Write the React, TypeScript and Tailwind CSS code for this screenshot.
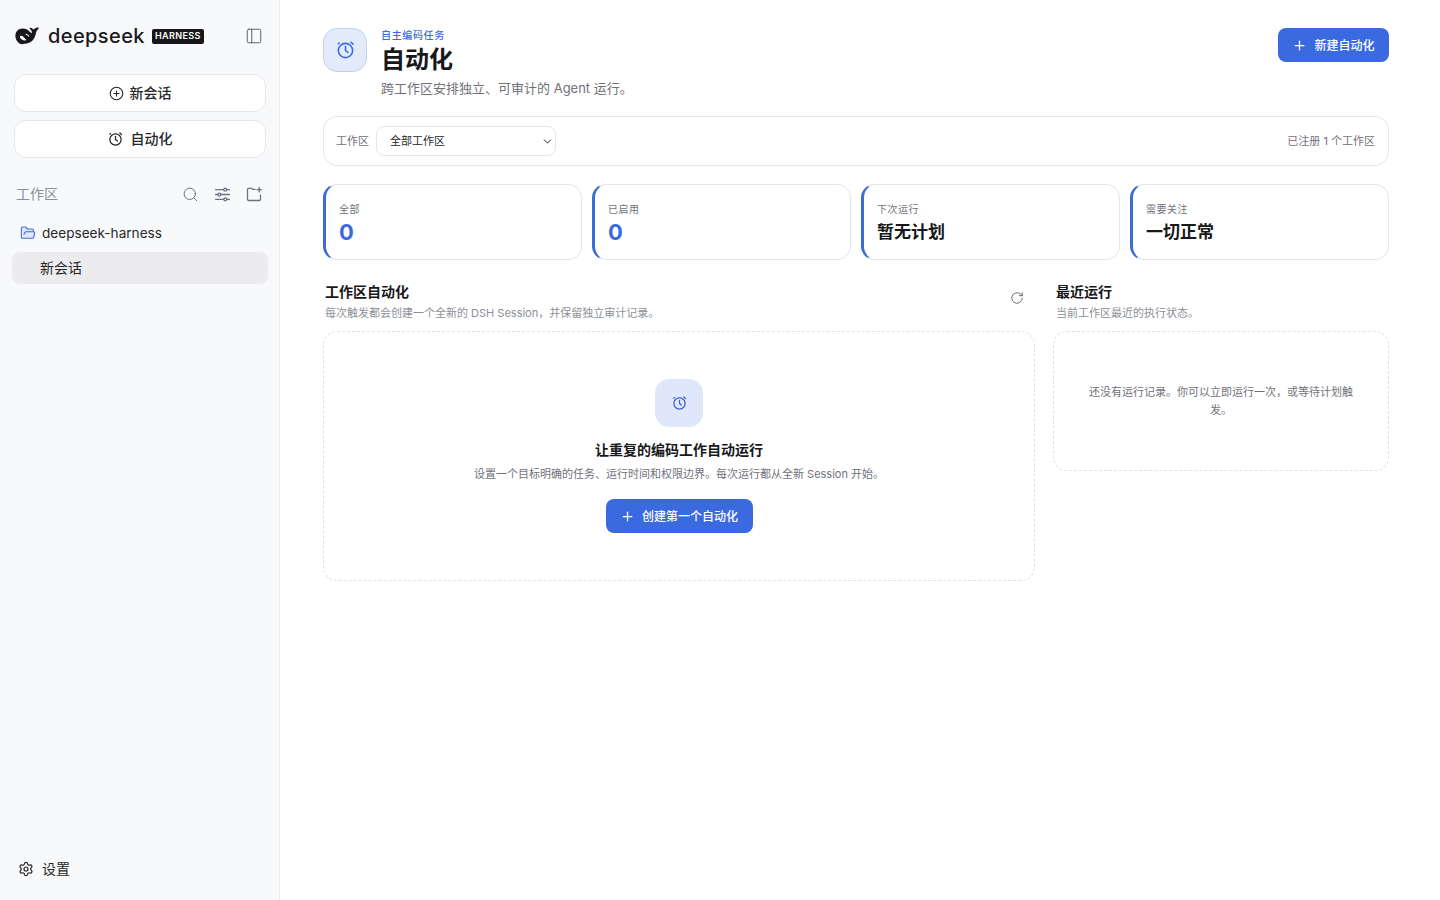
import { ChevronDown, CirclePlus, FolderOpen, PanelLeft, Plus, RotateCw, Search, Settings } from "lucide-react";

const stats = [
  { label: "全部", value: "0", accent: true },
  { label: "已启用", value: "0", accent: true },
  { label: "下次运行", value: "暂无计划", accent: false },
  { label: "需要关注", value: "一切正常", accent: false },
];

function WhaleLogo() {
  return (
    <svg width="25" height="20" viewBox="0 0 25 20" fill="none" className="shrink-0">
      <path
        d="M0.4 9.6C0.4 5.2 3.6 2.4 7.8 2.4c2.8 0 4.7 1 6.4 2.8 1 1.1 1.9 1.8 2.7 2 .2-1.6-.5-2.9-1.8-4-.9-.8-.6-1.7.5-1.5 1.2.2 2.4.9 3.2 1.9.9-1 2-1.7 3.6-2 1.3-.3 1.7.5 1 1.4-1.1 1.2-2 2.1-2.3 3.3-.9 6.5-4.6 11.4-11.6 11.4C4.6 19.7.4 15.1.4 9.6Z"
        fill="#18181b"
      />
      <path
        d="M5 10.2c.9-.8 2.2-.5 3.1.4 1.2 1.2 2.1 2.6 3.4 3.4-1.2.8-3.3.6-4.7-.5-1.4-1-2.4-2.6-1.8-3.3Z"
        fill="#f8f9fb"
      />
      <path d="M11 8.2c1 .2 2 .9 2.6 1.8" stroke="#f8f9fb" strokeWidth="1.1" strokeLinecap="round" />
    </svg>
  );
}

function ClockIcon({ size, stroke }: { size: number; stroke: number }) {
  return (
    <svg width={size} height={size} viewBox="0 1 24 24" fill="none" stroke="currentColor" strokeWidth={stroke} strokeLinecap="round" strokeLinejoin="round" className="shrink-0">
      <circle cx="12" cy="13" r="9" />
      <path d="M12 8v5l3 2.5" />
      <path d="M19 2.5l2.5 2.5M4 3.5L3 4.5" />
    </svg>
  );
}

function SlidersIcon() {
  return (
    <svg width="17" height="17" viewBox="0 0 16 16" fill="none" stroke="currentColor" strokeWidth="1.2" strokeLinecap="round">
      <path d="M1.5 3.5h7.7M12 3.5h2.5M1.5 8h2.2M6.6 8h7.9M1.5 12.5h7.7M12 12.5h2.5" />
      <circle cx="10.6" cy="3.5" r="1.4" />
      <circle cx="5.1" cy="8" r="1.4" />
      <circle cx="10.6" cy="12.5" r="1.4" />
    </svg>
  );
}

function NewFolderIcon() {
  return (
    <svg width="17" height="17" viewBox="0 0 17 17" fill="none" stroke="currentColor" strokeWidth="1.3" strokeLinecap="round" strokeLinejoin="round">
      <path d="M9 3.4H6.6L5.6 2.3H2.8c-.8 0-1.3.5-1.3 1.3v9.6c0 .8.5 1.3 1.3 1.3h10.4c.8 0 1.3-.5 1.3-1.3V8.8" />
      <path d="M13.2 1.5v4.4M11 3.7h4.4" />
    </svg>
  );
}

function Sidebar() {
  return (
    <aside className="w-[280px] h-full shrink-0 flex flex-col bg-[#f8f9fb] border-r border-[#eeeff2]">
      {/* Logo */}
      <div className="flex items-center h-[72px] pl-[15px] pr-4">
        <WhaleLogo />
        <span className="ml-2 text-[20px] leading-none font-medium tracking-[0.4px] text-[#18181b] font-['Inter',sans-serif]">
          deepseek
        </span>
        <span className="ml-[7px] px-[3px] h-[15px] flex items-center rounded-[2px] bg-[#18181b] text-white text-[9px] font-semibold tracking-[0.4px]">
          HARNESS
        </span>
        <PanelLeft size={18} strokeWidth={1.2} className="ml-auto text-[#52525b]" />
      </div>

      <div className="mt-[2px] pl-[14px] pr-[13px] flex flex-col gap-2">
        <button className="h-[38px] flex items-center justify-center gap-[6px] rounded-xl bg-white border border-[#e6e7eb] text-sm font-medium text-[#27272a]">
          <CirclePlus size={15} strokeWidth={1.8} />
          新会话
        </button>
        <button className="h-[38px] flex items-center justify-center gap-2 rounded-xl bg-white border border-[#e6e7eb] text-sm font-medium text-[#27272a]">
          <ClockIcon size={15} stroke={2} />
          自动化
        </button>
      </div>

      {/* Workspace list */}
      <div className="mt-[26px] pl-4 pr-4 h-5 flex items-center text-[#6b7280]">
        <span className="text-sm text-[#8b8f97]">工作区</span>
        <div className="ml-auto flex items-center gap-[15px]">
          <Search size={17} strokeWidth={1.4} />
          <SlidersIcon />
          <NewFolderIcon />
        </div>
      </div>
      <div className="mt-[19px] pl-5 h-[20px] flex items-center gap-[6px] text-[13.6px] text-[#27272a]">
        <FolderOpen size={16} strokeWidth={1.6} className="text-[#3b6cdf] fill-[#dfe8fb]" />
        deepseek-harness
      </div>
      <div className="mt-[9px] ml-3 mr-[11px] h-8 pl-7 flex items-center rounded-lg bg-[#ececee] text-sm text-[#27272a]">
        新会话
      </div>

      <div className="mt-auto mb-[21px] pl-[18px] h-5 flex items-center gap-2 text-sm text-[#27272a]">
        <Settings size={16} strokeWidth={1.8} />
        设置
      </div>
    </aside>
  );
}

export default function App() {
  return (
    <div className="h-[900px] flex bg-white overflow-hidden font-['Inter','Noto_Sans_CJK_SC',sans-serif]">
      <Sidebar />

      <main className="flex-1 pl-[43px] pr-[51px] pt-7">
        {/* Header */}
        <div className="flex items-start h-[88px]">
          <div className="w-11 h-11 rounded-[14px] bg-[#e3ebfb] border border-[#c3d1ee] flex items-center justify-center text-[#3b6cdf]">
            <ClockIcon size={19} stroke={2} />
          </div>
          <div className="ml-[14px]">
            <div className="text-[10px] leading-[14px] font-medium tracking-[0.65px] text-[#3b6cdf]">自主编码任务</div>
            <h1 className="mt-[2px] text-2xl leading-[32px] font-bold text-[#18181b]">自动化</h1>
            <p className="mt-[3px] text-[13px] leading-[18px] text-[#71717a]">跨工作区安排独立、可审计的 Agent 运行。</p>
          </div>
          <button className="ml-auto h-[34px] w-[111px] pt-px rounded-lg bg-[#3b6ae0] text-white text-xs font-medium flex items-center justify-center gap-[7px]">
            <Plus size={15} strokeWidth={2} />
            新建自动化
          </button>
        </div>

        {/* Workspace filter */}
        <div className="h-[50px] pl-3 pr-[13px] flex items-center rounded-[14px] border border-[#e6e7eb] text-[11px] text-[#71717a]">
          <span>工作区</span>
          <div className="ml-[7px] relative w-[180px]">
            <select className="w-full h-[30px] pl-[13px] appearance-none rounded-lg border border-[#e6e7eb] bg-white text-[11px] text-[#27272a]">
              <option>全部工作区</option>
            </select>
            <ChevronDown size={13} strokeWidth={1.8} className="absolute right-[2px] top-[9px] text-[#27272a]" />
          </div>
          <span className="ml-auto">已注册 1 个工作区</span>
        </div>

        {/* Stats */}
        <div className="mt-[18px] grid grid-cols-4 gap-[10px]">
          {stats.map((s) => (
            <div key={s.label} className="h-[76px] pl-[13px] pt-[17px] rounded-[14px] border border-[#e6e7eb] border-l-[3px] border-l-[#3b6cd6]">
              <div className="text-[10px] leading-[14px] tracking-[0.5px] text-[#71717a]">{s.label}</div>
              <div className={s.accent ? "mt-[2px] text-[22px] leading-[28px] font-bold text-[#3b6ae0]" : "mt-[2px] text-[17px] leading-[28px] font-bold text-[#18181b]"}>
                {s.value}
              </div>
            </div>
          ))}
        </div>

        {/* Sections */}
        <div className="mt-[22px] grid grid-cols-[minmax(0,1fr)_336px] gap-[18px] items-start">
          <section>
            <div className="h-[49px] pl-[2px] pr-[11px] flex items-start justify-between">
              <div>
                <h2 className="text-sm leading-[20px] font-semibold text-[#18181b]">工作区自动化</h2>
                <p className="mt-[3px] text-[11px] leading-[16px] text-[#8b8f97]">每次触发都会创建一个全新的 DSH Session，并保留独立审计记录。</p>
              </div>
              <RotateCw size={14} strokeWidth={1.4} className="mt-[9px] text-[#52525b]" />
            </div>
            <div className="h-[250px] pt-[47px] rounded-[14px] border border-dashed border-[#e1e2e6] flex flex-col items-center">
              <div className="w-12 h-12 rounded-[14px] bg-[#dfe8fb] flex items-center justify-center text-[#3b5fd0]">
                <ClockIcon size={15} stroke={2} />
              </div>
              <h3 className="mt-[13px] text-sm leading-[20px] font-semibold text-[#18181b]">让重复的编码工作自动运行</h3>
              <p className="mt-[6px] text-[11px] leading-[16px] text-[#71717a]">设置一个目标明确的任务、运行时间和权限边界。每次运行都从全新 Session 开始。</p>
              <button className="mt-[17px] h-[34px] w-[147px] pt-px rounded-lg bg-[#3b6ae0] text-white text-xs font-medium flex items-center justify-center gap-[7px]">
                <Plus size={15} strokeWidth={2} />
                创建第一个自动化
              </button>
            </div>
          </section>

          <section>
            <div className="h-[49px] pl-[3px]">
              <h2 className="text-sm leading-[20px] font-semibold text-[#18181b]">最近运行</h2>
              <p className="mt-[3px] text-[11px] leading-[16px] text-[#8b8f97]">当前工作区最近的执行状态。</p>
            </div>
            <div className="h-[140px] px-[30px] rounded-[14px] border border-dashed border-[#e1e2e6] flex items-center justify-center text-center text-[11px] leading-[18px] text-[#71717a]">
              还没有运行记录。你可以立即运行一次，或等待计划触发。
            </div>
          </section>
        </div>
      </main>
    </div>
  );
}
